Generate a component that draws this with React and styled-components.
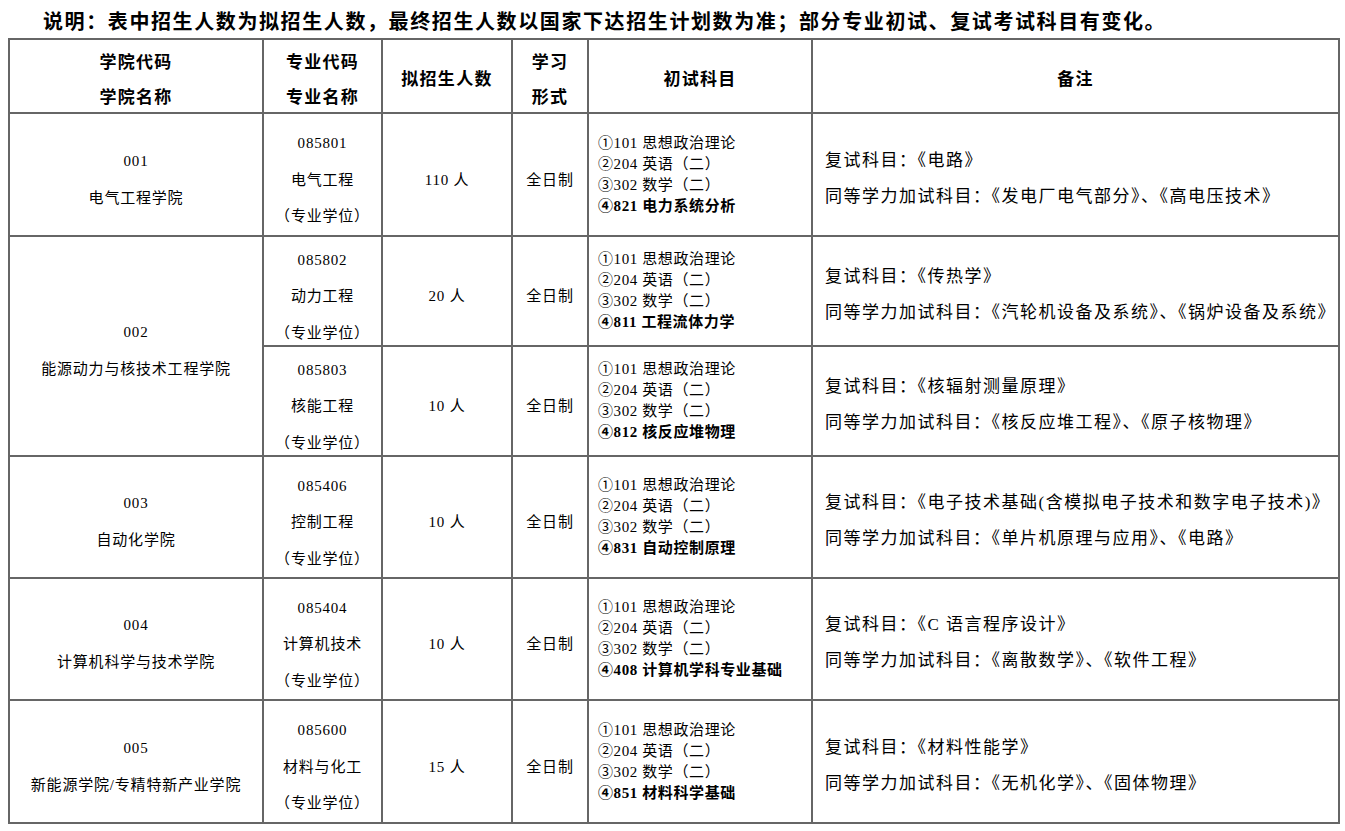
import React from 'react';
import styled, { createGlobalStyle } from 'styled-components';

const GlobalStyle = createGlobalStyle`
  html, body { margin: 0; padding: 0; background: #fff; }
  body {
    font-family: "Liberation Serif", "Noto Sans CJK SC", serif;
    color: #000;
  }
`;

const Page = styled.div`
  padding: 0 0 0 8px;
  width: 1330px;
`;

const Title = styled.h1`
  margin: 0;
  padding: 5px 0 0 35px;
  height: 33px;
  line-height: 34px;
  font-size: 20px;
  font-weight: 700;
  letter-spacing: 1.6px;
  white-space: nowrap;
  text-spacing-trim: space-all;
`;

const Table = styled.table`
  border-collapse: collapse;
  table-layout: fixed;
  width: 1330px;
`;

const Row = styled.tr`
  height: ${(p) => p.$h}px;
`;

const Th = styled.th`
  border: 2px solid #666;
  padding: 8px 0 0;
  font-size: 17px;
  font-weight: 700;
  letter-spacing: 1.3px;
  line-height: 20px;
  text-align: center;
  vertical-align: middle;
`;

const Td = styled.td`
  border: 2px solid #666;
  padding: ${(p) => p.$pt ?? 9}px 0 0 ${(p) => p.$pl ?? 0}px;
  font-size: 15px;
  letter-spacing: 0.8px;
  line-height: 20px;
  text-align: center;
  vertical-align: middle;
  white-space: nowrap;
  text-spacing-trim: space-all;
`;

const SubjectCell = styled(Td)`
  text-align: left;
  letter-spacing: 0.6px;
  line-height: 21px;
`;

const NoteCell = styled(Td)`
  text-align: left;
  font-size: 17px;
  letter-spacing: 1.5px;
  text-spacing-trim: normal;
`;

const Stack = styled.div`
  display: flex;
  flex-direction: column;
  align-items: ${(p) => (p.$left ? 'flex-start' : 'center')};
  gap: ${(p) => p.$gap ?? 0}px;
`;

const Line = styled.div`
  font-weight: ${(p) => (p.$bold ? 700 : 'inherit')};
`;

const data = [
  {
    code: '001',
    name: '电气工程学院',
    majors: [
      {
        code: '085801',
        name: '电气工程',
        num: '110 人',
        h: 123,
        last: '④821 电力系统分析',
        retest: '复试科目：《电路》',
        extra: '同等学力加试科目：《发电厂电气部分》、《高电压技术》',
      },
    ],
  },
  {
    code: '002',
    name: '能源动力与核技术工程学院',
    majors: [
      {
        code: '085802',
        name: '动力工程',
        num: '20 人',
        h: 110,
        last: '④811 工程流体力学',
        retest: '复试科目：《传热学》',
        extra: '同等学力加试科目：《汽轮机设备及系统》、《锅炉设备及系统》',
      },
      {
        code: '085803',
        name: '核能工程',
        num: '10 人',
        h: 110,
        last: '④812 核反应堆物理',
        retest: '复试科目：《核辐射测量原理》',
        extra: '同等学力加试科目：《核反应堆工程》、《原子核物理》',
      },
    ],
  },
  {
    code: '003',
    name: '自动化学院',
    majors: [
      {
        code: '085406',
        name: '控制工程',
        num: '10 人',
        h: 122,
        last: '④831 自动控制原理',
        retest: '复试科目：《电子技术基础(含模拟电子技术和数字电子技术)》',
        extra: '同等学力加试科目：《单片机原理与应用》、《电路》',
      },
    ],
  },
  {
    code: '004',
    name: '计算机科学与技术学院',
    majors: [
      {
        code: '085404',
        name: '计算机技术',
        num: '10 人',
        h: 122,
        last: '④408 计算机学科专业基础',
        retest: '复试科目：《C 语言程序设计》',
        extra: '同等学力加试科目：《离散数学》、《软件工程》',
      },
    ],
  },
  {
    code: '005',
    name: '新能源学院/专精特新产业学院',
    majors: [
      {
        code: '085600',
        name: '材料与化工',
        num: '15 人',
        h: 123,
        last: '④851 材料科学基础',
        retest: '复试科目：《材料性能学》',
        extra: '同等学力加试科目：《无机化学》、《固体物理》',
      },
    ],
  },
];

export default function App() {
  return (
    <>
      <GlobalStyle />
      <Page>
        <Title>说明：表中招生人数为拟招生人数，最终招生人数以国家下达招生计划数为准；部分专业初试、复试考试科目有变化。</Title>
        <Table>
          <colgroup>
            <col style={{ width: 254 }} />
            <col style={{ width: 119 }} />
            <col style={{ width: 130 }} />
            <col style={{ width: 76 }} />
            <col style={{ width: 224 }} />
            <col style={{ width: 527 }} />
          </colgroup>
          <thead>
            <Row $h={74}>
              <Th>
                <Stack $gap={15}>
                  <Line>学院代码</Line>
                  <Line>学院名称</Line>
                </Stack>
              </Th>
              <Th>
                <Stack $gap={15}>
                  <Line>专业代码</Line>
                  <Line>专业名称</Line>
                </Stack>
              </Th>
              <Th>拟招生人数</Th>
              <Th>
                <Stack $gap={15}>
                  <Line>学习</Line>
                  <Line>形式</Line>
                </Stack>
              </Th>
              <Th>初试科目</Th>
              <Th>备注</Th>
            </Row>
          </thead>
          <tbody>
            {data.map((c) =>
              c.majors.map((m, i) => (
                <Row $h={m.h} key={m.code}>
                  {i === 0 && (
                    <Td rowSpan={c.majors.length} $pt={9}>
                      <Stack $gap={17}>
                        <Line>{c.code}</Line>
                        <Line>{c.name}</Line>
                      </Stack>
                    </Td>
                  )}
                  <Td $pt={10}>
                    <Stack $gap={16.5}>
                      <Line>{m.code}</Line>
                      <Line>{m.name}</Line>
                      <Line>（专业学位）</Line>
                    </Stack>
                  </Td>
                  <Td $pt={10}>{m.num}</Td>
                  <Td $pt={10}>全日制</Td>
                  <SubjectCell $pt={0} $pl={9}>
                    <Stack $left>
                      <Line>①101 思想政治理论</Line>
                      <Line>②204 英语（二）</Line>
                      <Line>③302 数学（二）</Line>
                      <Line $bold>{m.last}</Line>
                    </Stack>
                  </SubjectCell>
                  <NoteCell $pt={8} $pl={12}>
                    <Stack $left $gap={16}>
                      <Line>{m.retest}</Line>
                      <Line>{m.extra}</Line>
                    </Stack>
                  </NoteCell>
                </Row>
              ))
            )}
          </tbody>
        </Table>
      </Page>
    </>
  );
}
